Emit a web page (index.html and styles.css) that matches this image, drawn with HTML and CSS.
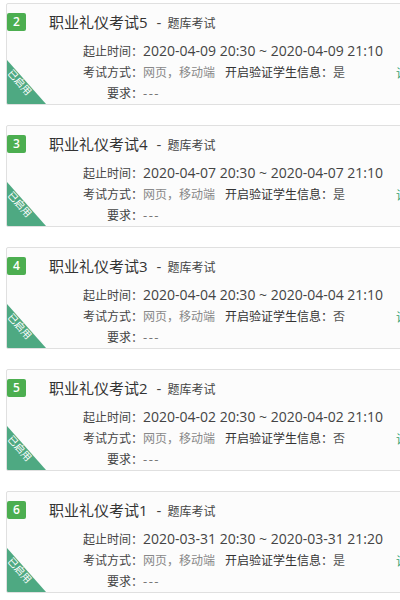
FILE: index.html
```html
<!DOCTYPE html>
<html lang="zh-CN">
<head>
  <meta charset="UTF-8">
  <title>考试列表</title>
  <link rel="stylesheet" href="styles.css">
</head>
<body>
  <div class="exam-list">

    <div class="exam-card">
      <div class="side"><span class="num">2</span></div>
      <div class="main">
        <div class="title">职业礼仪考试5<span class="dash">-</span><span class="sub">题库考试</span></div>
        <div class="row"><span class="label">起止时间：</span><span class="time">2020-04-09 20:30 ~ 2020-04-09 21:10</span></div>
        <div class="row"><span class="label">考试方式：</span><span class="light">网页，移动端</span><span class="label2">开启验证学生信息：</span><span class="val">是</span></div>
        <div class="row"><span class="label">要求：</span><span class="none">---</span></div>
      </div>
      <div class="action">详情</div>
      <div class="corner"><span>已启用</span></div>
    </div>

    <div class="exam-card">
      <div class="side"><span class="num">3</span></div>
      <div class="main">
        <div class="title">职业礼仪考试4<span class="dash">-</span><span class="sub">题库考试</span></div>
        <div class="row"><span class="label">起止时间：</span><span class="time">2020-04-07 20:30 ~ 2020-04-07 21:10</span></div>
        <div class="row"><span class="label">考试方式：</span><span class="light">网页，移动端</span><span class="label2">开启验证学生信息：</span><span class="val">是</span></div>
        <div class="row"><span class="label">要求：</span><span class="none">---</span></div>
      </div>
      <div class="action">详情</div>
      <div class="corner"><span>已启用</span></div>
    </div>

    <div class="exam-card">
      <div class="side"><span class="num">4</span></div>
      <div class="main">
        <div class="title">职业礼仪考试3<span class="dash">-</span><span class="sub">题库考试</span></div>
        <div class="row"><span class="label">起止时间：</span><span class="time">2020-04-04 20:30 ~ 2020-04-04 21:10</span></div>
        <div class="row"><span class="label">考试方式：</span><span class="light">网页，移动端</span><span class="label2">开启验证学生信息：</span><span class="val">否</span></div>
        <div class="row"><span class="label">要求：</span><span class="none">---</span></div>
      </div>
      <div class="action">详情</div>
      <div class="corner"><span>已启用</span></div>
    </div>

    <div class="exam-card">
      <div class="side"><span class="num">5</span></div>
      <div class="main">
        <div class="title">职业礼仪考试2<span class="dash">-</span><span class="sub">题库考试</span></div>
        <div class="row"><span class="label">起止时间：</span><span class="time">2020-04-02 20:30 ~ 2020-04-02 21:10</span></div>
        <div class="row"><span class="label">考试方式：</span><span class="light">网页，移动端</span><span class="label2">开启验证学生信息：</span><span class="val">否</span></div>
        <div class="row"><span class="label">要求：</span><span class="none">---</span></div>
      </div>
      <div class="action">详情</div>
      <div class="corner"><span>已启用</span></div>
    </div>

    <div class="exam-card">
      <div class="side"><span class="num">6</span></div>
      <div class="main">
        <div class="title">职业礼仪考试1<span class="dash">-</span><span class="sub">题库考试</span></div>
        <div class="row"><span class="label">起止时间：</span><span class="time">2020-03-31 20:30 ~ 2020-03-31 21:20</span></div>
        <div class="row"><span class="label">考试方式：</span><span class="light">网页，移动端</span><span class="label2">开启验证学生信息：</span><span class="val">是</span></div>
        <div class="row"><span class="label">要求：</span><span class="none">---</span></div>
      </div>
      <div class="action">详情</div>
      <div class="corner"><span>已启用</span></div>
    </div>

  </div>
</body>
</html>
```

FILE: styles.css
```css
html, body {
  overflow: hidden;
}
body {
  margin: 0;
  background: #fff;
  font-family: "Open Sans", "Noto Sans CJK SC", sans-serif;
  color: #444;
  text-spacing-trim: space-all;
}
.exam-list {
  padding: 3px 0 0 6px;
}
.exam-card {
  position: relative;
  display: flex;
  width: 440px;
  height: 102px;
  box-sizing: border-box;
  margin-bottom: 20px;
  background: #fcfcfc;
  border: 1px solid #e0e0e0;
  border-radius: 2px;
  overflow: hidden;
}
.side {
  width: 42px;
  flex: none;
  padding-top: 9px;
}
.num {
  display: block;
  width: 19px;
  height: 18px;
  line-height: 18px;
  background: #4cae50;
  color: #fff;
  font-size: 12px;
  font-weight: 600;
  text-align: center;
  border-radius: 2px;
}
.main {
  flex: 1;
  padding-top: 7px;
}
.title {
  font-size: 15px;
  line-height: 22px;
  color: #333;
  margin-bottom: 5px;
}
.dash {
  margin: 0 6px 0 9px;
  color: #444;
}
.sub {
  font-size: 12px;
  color: #444;
}
.row {
  display: flex;
  align-items: baseline;
  line-height: 21px;
  font-size: 12px;
}
.label {
  width: 94px;
  flex: none;
  text-align: right;
  color: #444;
  font-family: "Noto Sans CJK SC", sans-serif;
}
.time {
  font-size: 14px;
  color: #444;
}
.light {
  color: #888;
  font-family: "Noto Sans CJK SC", sans-serif;
}
.label2 {
  margin-left: 10px;
  color: #333;
  font-family: "Noto Sans CJK SC", sans-serif;
}
.val {
  color: #555;
  font-family: "Noto Sans CJK SC", sans-serif;
}
.none {
  color: #777;
  letter-spacing: 1.5px;
  font-size: 13px;
}
.action {
  width: 49px;
  flex: none;
  padding: 59px 0 0 0;
  font-size: 12px;
  line-height: 21px;
  color: #2e9e6b;
}
.corner {
  position: absolute;
  left: 0;
  bottom: 0;
  width: 39px;
  height: 44px;
  background: #4ea982;
  clip-path: polygon(0 0, 100% 100%, 0 100%);
}
.corner span {
  position: absolute;
  left: -5px;
  top: 16px;
  width: 36px;
  text-align: center;
  font-size: 10px;
  line-height: 12px;
  color: #fff;
  transform: rotate(48deg);
}
```
